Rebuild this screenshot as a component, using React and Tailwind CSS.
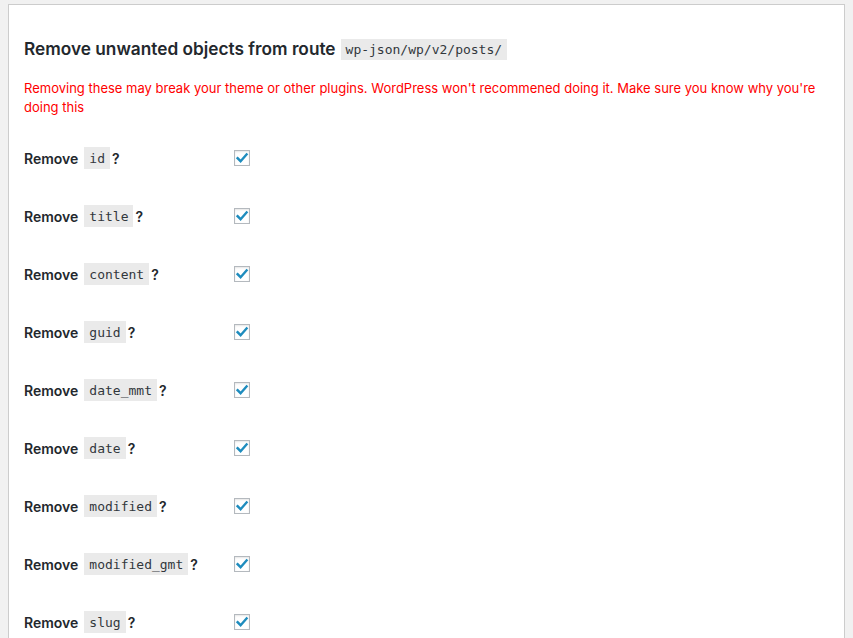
import React from 'react'

const fields = ['id', 'title', 'content', 'guid', 'date_mmt', 'date', 'modified', 'modified_gmt', 'slug']

const sans = "font-['Inter','Liberation_Sans',sans-serif]"
const mono = "font-['DejaVu_Sans_Mono','Liberation_Mono',monospace]"

function Checkbox() {
  return (
    <span className="flex h-4 w-4 items-center justify-center border border-[#b4b9be] bg-white shadow-[inset_0_1px_2px_rgba(0,0,0,0.1)]">
      <svg width="14" height="14" viewBox="0 0 14 14" fill="none">
        <path d="M2.6 7.2 L5.6 10.2 L11.6 3.4" stroke="#1e8cbe" strokeWidth="2.4" strokeLinecap="square" strokeLinejoin="miter" />
      </svg>
    </span>
  )
}

function Row({ name }) {
  return (
    <div className="flex h-[58px] items-center">
      <div className="flex w-[210px] items-center text-[14px] font-semibold text-[#23282d]">
        <span>Remove</span>
        <code className={`${mono} ml-[6px] bg-[#eaeaea] px-[5px] pb-[2px] pt-[3px] text-[13px] font-normal leading-[17px] text-[#32373c]`}>
          {name}
        </code>
        <span className="ml-[2px]">?</span>
      </div>
      <Checkbox />
    </div>
  )
}

export default function App() {
  return (
    <div className={`${sans} min-h-[638px] bg-[#f1f1f1] px-2 pt-1`}>
      <div className="h-[640px] border border-[#cccccc] bg-white px-[15px] pt-[32px]">
        <h2 className="flex items-center text-[17.25px] font-semibold leading-[24px] text-[#23282d]">
          <span>Remove unwanted objects from route</span>
          <code className={`${mono} ml-[5px] bg-[#eaeaea] px-[5px] pb-[2px] pt-[3px] text-[13px] font-normal leading-[16px] text-[#32373c]`}>
            wp-json/wp/v2/posts/
          </code>
        </h2>
        <p className="mt-[18px] text-[13px] leading-[19px] text-[#ff0000]">
          Removing these may break your theme or other plugins. WordPress won't recommened doing it. Make sure you know why you're doing this
        </p>
        <div className="mt-[12px]">
          {fields.map((f) => (
            <Row key={f} name={f} />
          ))}
        </div>
      </div>
    </div>
  )
}
